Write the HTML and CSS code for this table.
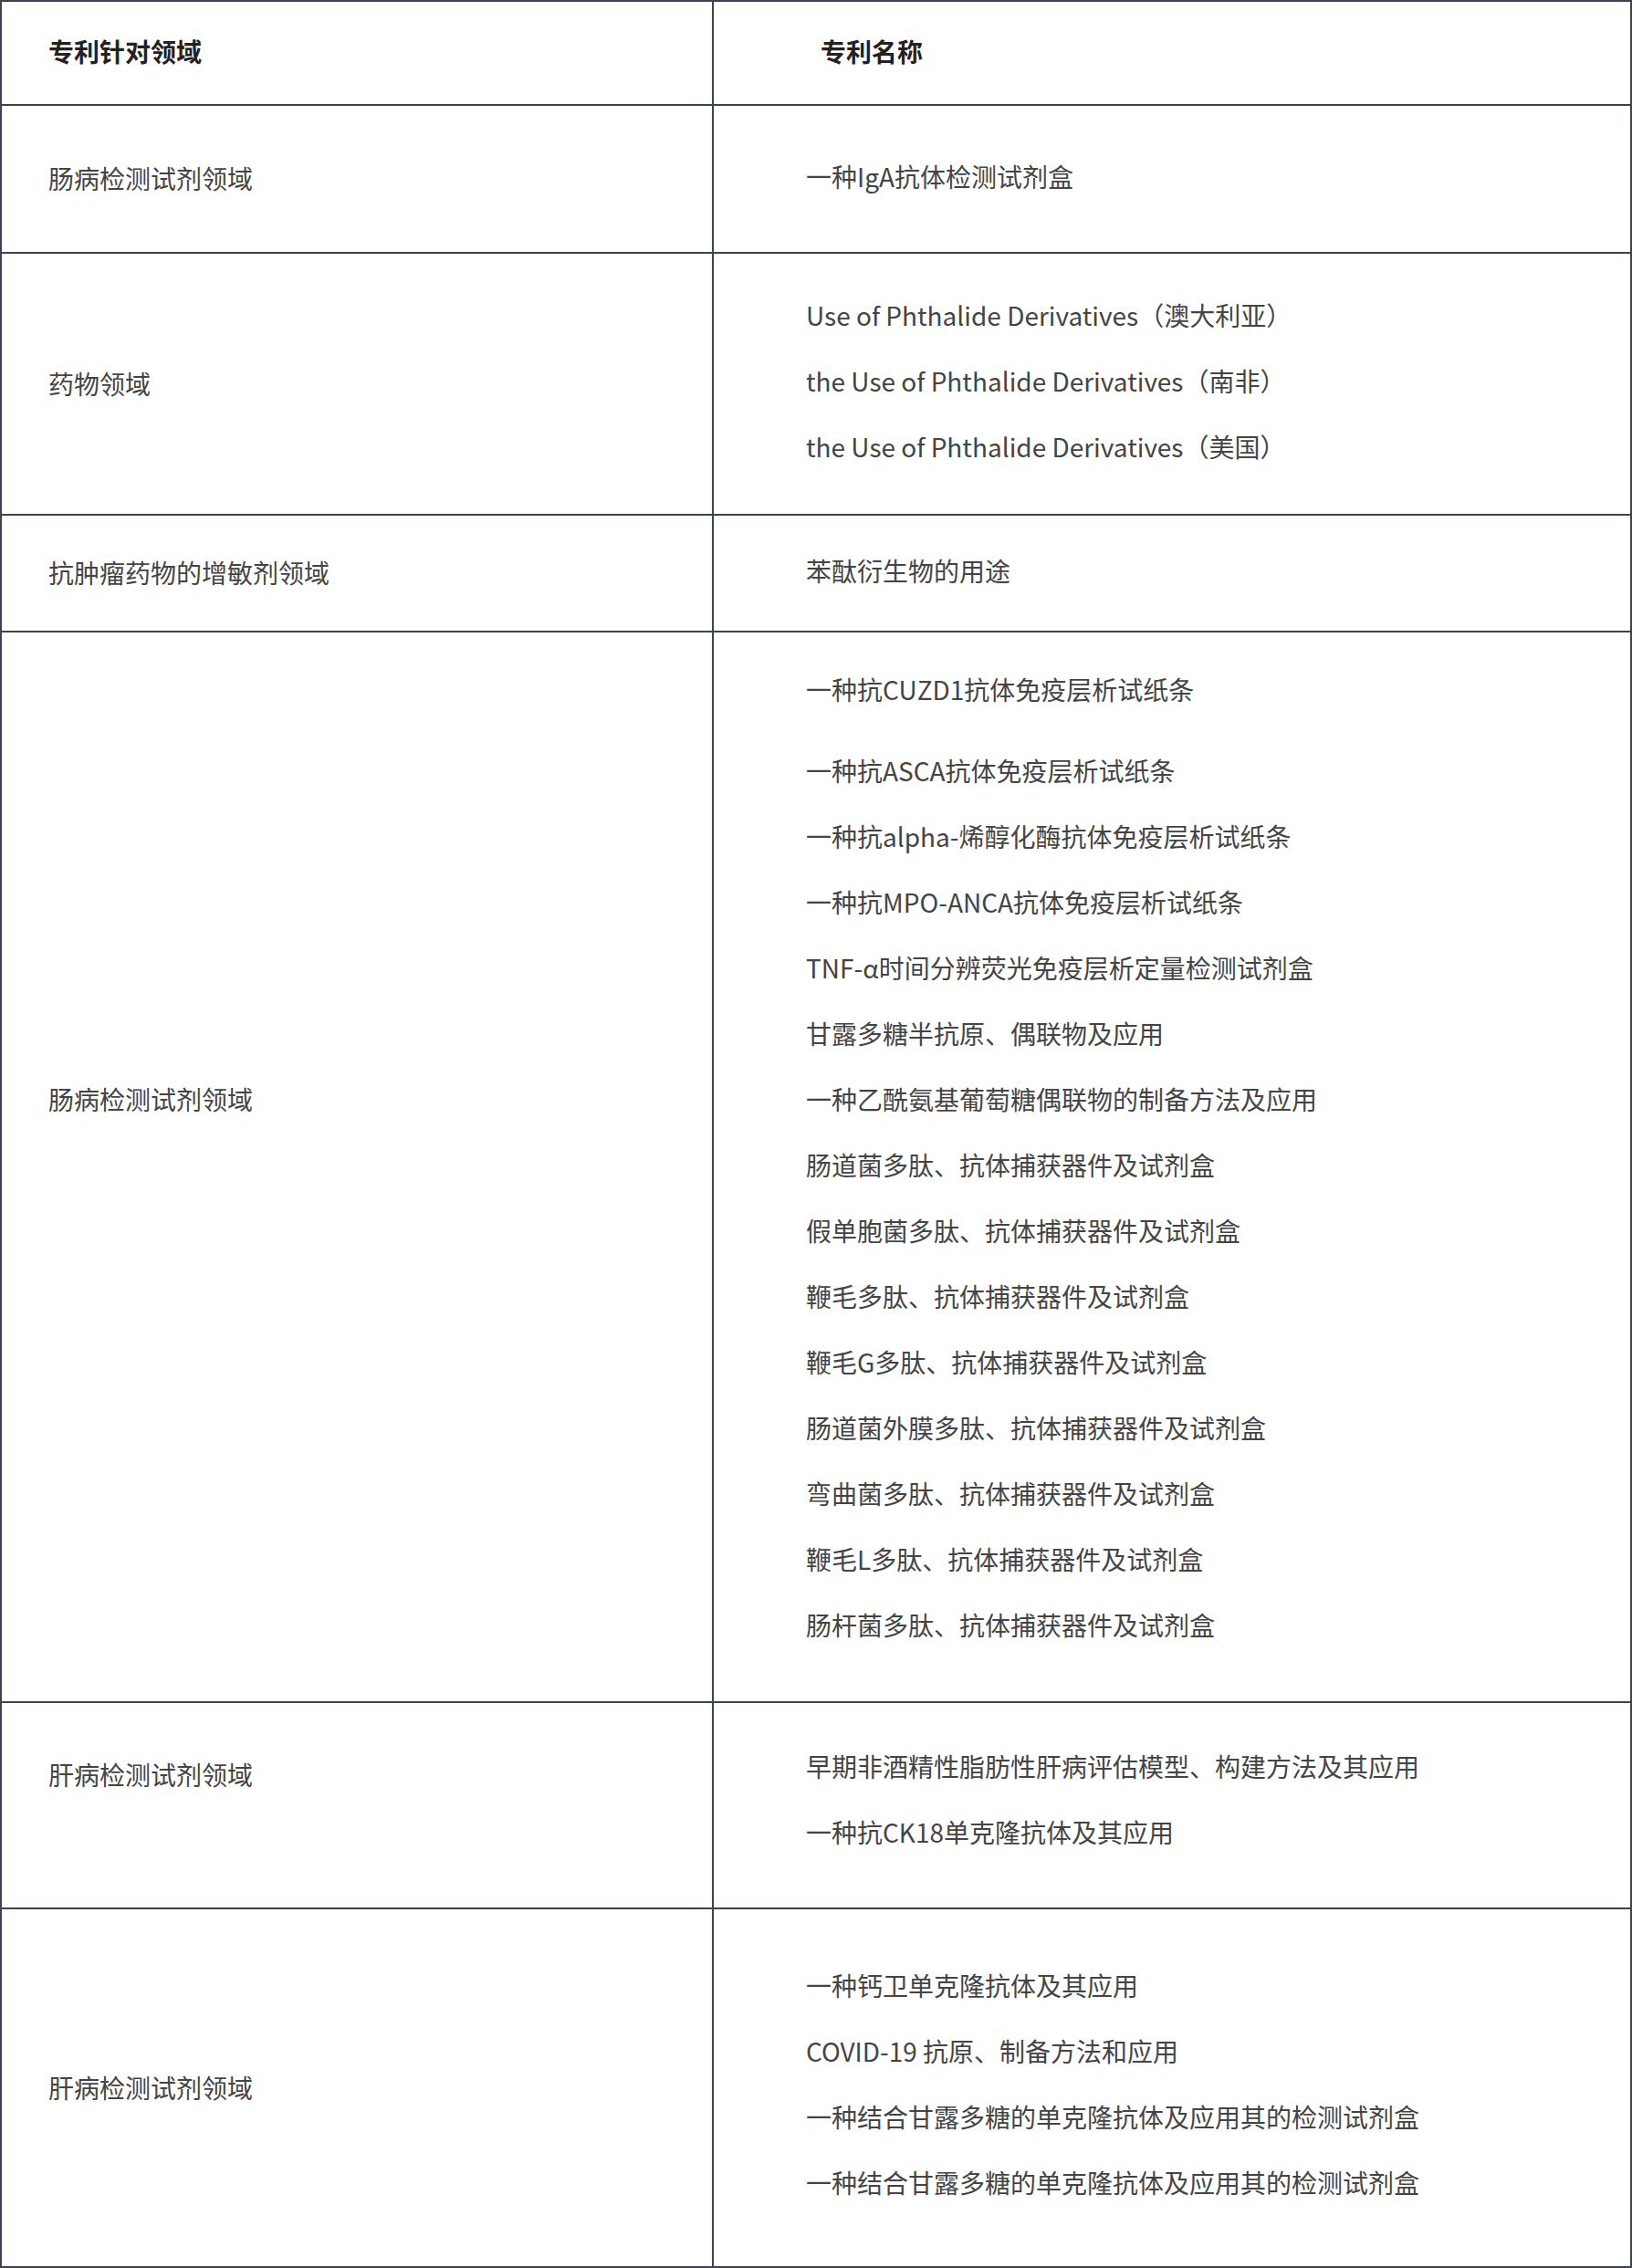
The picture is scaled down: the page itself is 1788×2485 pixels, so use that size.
FILE: index.html
```html
<!DOCTYPE html>
<html lang="zh">
<head>
  <meta charset="UTF-8" />
  <meta name="viewport" content="width=device-width, initial-scale=1.0" />
  <title>专利列表</title>
  <link rel="stylesheet" href="styles.css">
</head>
<body>
  <div class="patents">
    <div class="row head">
      <div class="cell field">专利针对领域</div>
      <div class="cell names">专利名称</div>
    </div>

    <div class="row">
      <div class="cell field">肠病检测试剂领域</div>
      <div class="cell names pad-single">
        <p>一种IgA抗体检测试剂盒</p>
      </div>
    </div>

    <div class="row">
      <div class="cell field">药物领域</div>
      <div class="cell names pad-drug">
        <p>Use of Phthalide Derivatives（澳大利亚）</p>
        <p>the Use of Phthalide Derivatives（南非）</p>
        <p>the Use of Phthalide Derivatives（美国）</p>
      </div>
    </div>

    <div class="row">
      <div class="cell field">抗肿瘤药物的增敏剂领域</div>
      <div class="cell names pad-short">
        <p>苯酞衍生物的用途</p>
      </div>
    </div>

    <div class="row">
      <div class="cell field shift-long">肠病检测试剂领域</div>
      <div class="cell names pad-long">
        <p class="gap">一种抗CUZD1抗体免疫层析试纸条</p>
        <p>一种抗ASCA抗体免疫层析试纸条</p>
        <p>一种抗alpha-烯醇化酶抗体免疫层析试纸条</p>
        <p>一种抗MPO-ANCA抗体免疫层析试纸条</p>
        <p>TNF-α时间分辨荧光免疫层析定量检测试剂盒</p>
        <p>甘露多糖半抗原、偶联物及应用</p>
        <p>一种乙酰氨基葡萄糖偶联物的制备方法及应用</p>
        <p>肠道菌多肽、抗体捕获器件及试剂盒</p>
        <p>假单胞菌多肽、抗体捕获器件及试剂盒</p>
        <p>鞭毛多肽、抗体捕获器件及试剂盒</p>
        <p>鞭毛G多肽、抗体捕获器件及试剂盒</p>
        <p>肠道菌外膜多肽、抗体捕获器件及试剂盒</p>
        <p>弯曲菌多肽、抗体捕获器件及试剂盒</p>
        <p>鞭毛L多肽、抗体捕获器件及试剂盒</p>
        <p>肠杆菌多肽、抗体捕获器件及试剂盒</p>
      </div>
    </div>

    <div class="row">
      <div class="cell field shift-mid">肝病检测试剂领域</div>
      <div class="cell names pad-liver">
        <p>早期非酒精性脂肪性肝病评估模型、构建方法及其应用</p>
        <p>一种抗CK18单克隆抗体及其应用</p>
      </div>
    </div>

    <div class="row">
      <div class="cell field">肝病检测试剂领域</div>
      <div class="cell names pad-last">
        <p>一种钙卫单克隆抗体及其应用</p>
        <p>COVID-19 抗原、制备方法和应用</p>
        <p>一种结合甘露多糖的单克隆抗体及应用其的检测试剂盒</p>
        <p>一种结合甘露多糖的单克隆抗体及应用其的检测试剂盒</p>
      </div>
    </div>
  </div>
</body>
</html>
```

FILE: styles.css
```css
* {
  box-sizing: border-box;
}
body {
  margin: 0;
  font-family: "Noto Sans CJK SC", "Noto Sans", sans-serif;
  color: #444;
  background: #fff;
}
.patents {
  border: 2px solid #3b4453;
}
.row {
  display: grid;
  grid-template-columns: 780px 1fr;
  border-top: 2px solid #3b4453;
}
.row:first-child {
  border-top: none;
}
.cell {
  display: flex;
  flex-direction: column;
  justify-content: center;
  font-size: 28px;
  line-height: 72px;
}
.cell p {
  margin: 0;
}
.field {
  padding-left: 51px;
  padding-bottom: 2px;
  border-right: 2px solid #3b4453;
}
.names {
  padding-left: 101px;
}
.head .cell {
  padding-top: 18px;
  padding-bottom: 22px;
  font-weight: bold;
  color: #222;
}
.head .names {
  padding-left: 117px;
}

/* vertical spacing per row */
.pad-single {
  padding-top: 41px;
  padding-bottom: 47px;
}
.pad-drug {
  padding-top: 31px;
  padding-bottom: 38px;
}
.pad-short {
  padding-top: 24px;
  padding-bottom: 30px;
}
.pad-long {
  padding-top: 26px;
  padding-bottom: 48px;
}
.pad-long .gap {
  margin-bottom: 17px;
}
.pad-liver {
  padding-top: 33px;
  padding-bottom: 47px;
}
.pad-last {
  padding-top: 47px;
  padding-bottom: 56px;
}
.shift-long {
  padding-bottom: 150px;
}
.shift-mid {
  padding-bottom: 68px;
}
```
